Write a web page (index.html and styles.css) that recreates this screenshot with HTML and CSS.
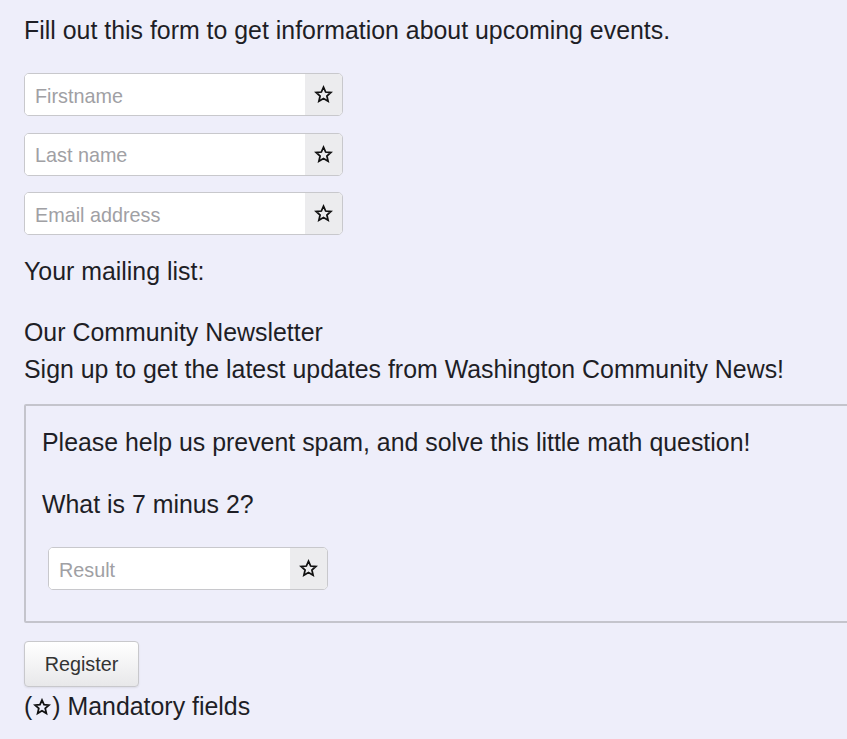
FILE: index.html
```html
<!DOCTYPE html>
<html lang="en">
<head>
<meta charset="utf-8">
<title>Event registration</title>
<link rel="stylesheet" href="styles.css">
</head>
<body>
<form class="form">
  <p class="intro">Fill out this form to get information about upcoming events.</p>
  <div class="fields">
    <div class="group"><input class="field" type="text" placeholder="Firstname"><span class="addon"><svg class="star-icon" viewBox="0 0 24 24"><path d="M12 2.8l2.7 6.1 6.6.6-5 4.4 1.5 6.5L12 17l-5.8 3.4 1.5-6.5-5-4.4 6.6-.6z"/></svg></span></div>
    <div class="group"><input class="field" type="text" placeholder="Last name"><span class="addon"><svg class="star-icon" viewBox="0 0 24 24"><path d="M12 2.8l2.7 6.1 6.6.6-5 4.4 1.5 6.5L12 17l-5.8 3.4 1.5-6.5-5-4.4 6.6-.6z"/></svg></span></div>
    <div class="group"><input class="field" type="text" placeholder="Email address"><span class="addon"><svg class="star-icon" viewBox="0 0 24 24"><path d="M12 2.8l2.7 6.1 6.6.6-5 4.4 1.5 6.5L12 17l-5.8 3.4 1.5-6.5-5-4.4 6.6-.6z"/></svg></span></div>
  </div>
  <p class="list-label">Your mailing list:</p>
  <div class="newsletter">
    <p class="line">Our Community Newsletter</p>
    <p class="line">Sign up to get the latest updates from Washington Community News!</p>
  </div>
  <fieldset class="captcha">
    <p class="cap-text">Please help us prevent spam, and solve this little math question!</p>
    <p class="cap-text q">What is 7 minus 2?</p>
    <div class="group small"><input class="field" type="text" placeholder="Result"><span class="addon"><svg class="star-icon" viewBox="0 0 24 24"><path d="M12 2.8l2.7 6.1 6.6.6-5 4.4 1.5 6.5L12 17l-5.8 3.4 1.5-6.5-5-4.4 6.6-.6z"/></svg></span></div>
  </fieldset>
  <button class="btn" type="button">Register</button>
  <p class="note">(<svg class="star-icon inline" viewBox="0 0 24 24"><path d="M12 2.8l2.7 6.1 6.6.6-5 4.4 1.5 6.5L12 17l-5.8 3.4 1.5-6.5-5-4.4 6.6-.6z"/></svg>) Mandatory fields</p>
</form>
</body>
</html>
```

FILE: styles.css
```css
html { overflow-x: hidden; }
body {
  margin: 0;
  background: #eeeefa;
  color: #1e1e26;
  font-family: "Liberation Sans", Arial, sans-serif;
  font-size: 24.9px;
}
.form { padding: 12px 0 0 24px; }
p { margin: 0; }
.intro { line-height: 36px; margin-bottom: 25px; }
.fields { display: flex; flex-direction: column; gap: 16.5px; }
.group {
  display: flex;
  width: 319px;
  height: 43px;
  box-sizing: border-box;
  border: 1px solid #c8c8cc;
  border-radius: 5px;
  overflow: hidden;
  background: #fff;
}
.field {
  flex: 1;
  min-width: 0;
  border: 0;
  outline: 0;
  padding: 3px 10px 0;
  font-family: "Liberation Sans", Arial, sans-serif;
  font-size: 19.8px;
  color: #333;
  background: #fff;
}
.field::placeholder { color: #a0a0a4; }
.addon {
  width: 37px;
  display: flex;
  align-items: center;
  justify-content: center;
  background: #ececee;
}
.star-icon {
  width: 19px;
  height: 19px;
  fill: none;
  stroke: #111;
  stroke-width: 2.2;
  stroke-linejoin: miter;
}
.star-icon.inline {
  width: 18px;
  height: 18px;
  margin: 0 1px;
  vertical-align: -1px;
  stroke-width: 2.4;
}
.list-label { line-height: 36px; margin-top: 18px; }
.newsletter { margin-top: 25px; }
.line { line-height: 37px; }
.captcha {
  margin: 16px -40px 0 0;
  padding: 18px 16px 31px;
  border: 2px solid #c4c4cc;
  border-radius: 2px;
  min-width: 0;
}
.cap-text { line-height: 36px; }
.cap-text.q { margin-top: 26px; }
.group.small { width: 280px; margin: 25px 0 0 6px; }
.btn {
  display: block;
  margin-top: 18px;
  width: 115px;
  height: 46px;
  border: 1px solid #c8c8cc;
  border-radius: 4px;
  background: linear-gradient(#ffffff, #e8e8ea);
  box-shadow: 0 1px 2px rgba(0,0,0,0.08);
  font-family: "Liberation Sans", Arial, sans-serif;
  font-size: 19.8px;
  color: #333;
  padding: 0;
}
.note { line-height: 36px; margin-top: 1px; }
```
